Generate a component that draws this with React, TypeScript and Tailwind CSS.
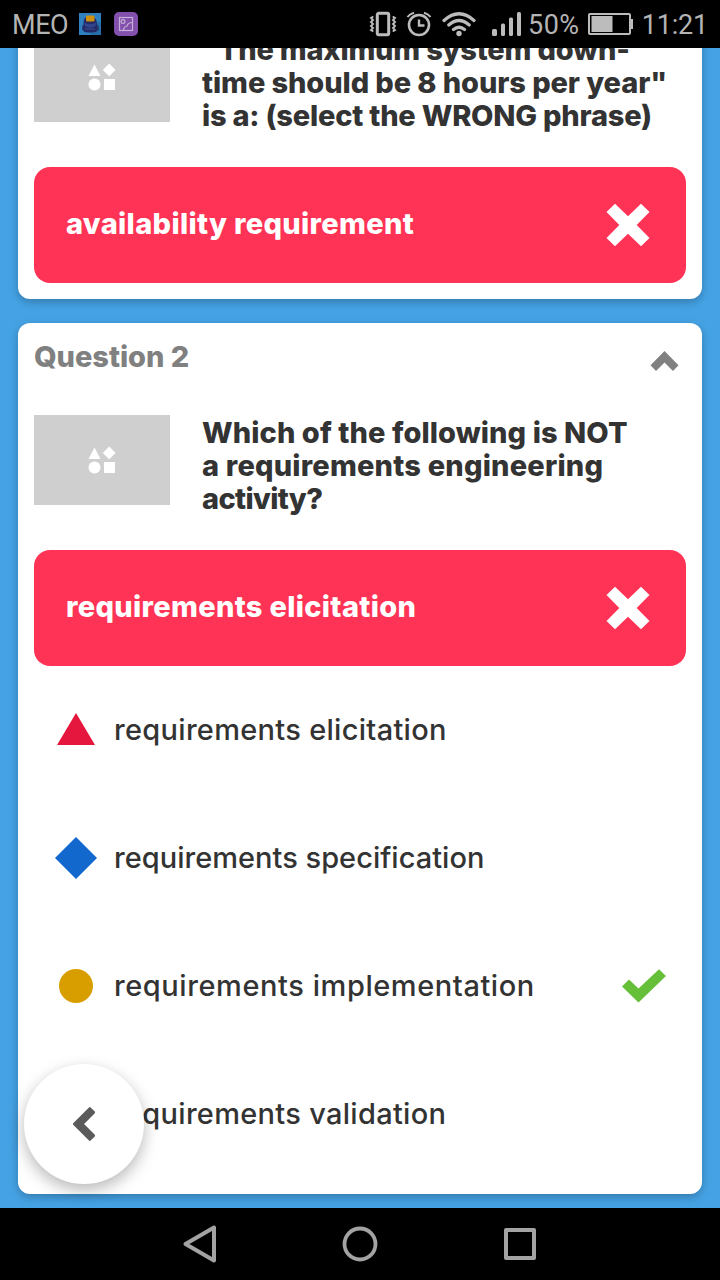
import React from 'react';

type Line = { text: string; spacing: string };

function StatusBar() {
  return (
    <header className="z-10 flex h-12 shrink-0 items-center bg-black pl-[12px] pr-[12px] font-['Roboto',sans-serif] text-[27px] leading-[48px] text-[#b4b4b4]">
      <span className="w-[67px] pt-[2px] tracking-[-0.4px]">MEO</span>
      <svg className="h-[22px] w-[22px]" viewBox="0 0 22 22">
        <rect width="22" height="22" fill="#2e80bf" />
        <path d="M9 17l11-9 2 3v11H12z" fill="#266fa8" />
        <rect x="3" y="12" width="17" height="6" rx="2" fill="#243b78" />
        <path d="M4.500 18V11C4.500 5 7 3 11 3s7 3 7 8v7c0 1-4 1.500-7 1.500S4.500 19 4.500 18z" fill="#232a66" />
        <rect x="7" y="2.500" width="8.500" height="6" rx="1" fill="#d0900f" />
        <path d="M5 9c4 3 9 3 12.500 0l-1 4c-3 2-8 2-10.500 0z" fill="#34458d" />
        <path d="M6 16h10" stroke="#39509b" />
      </svg>
      <svg className="ml-[13px] h-[24px] w-[24px]" viewBox="0 0 24 24" fill="none" stroke="#c5afd6" strokeWidth="1.200">
        <rect width="24" height="24" rx="5" fill="#8350ad" stroke="none" />
        <rect x="5.500" y="5.500" width="13" height="13" />
        <circle cx="9" cy="9.500" r="1.900" />
        <path d="M9.500 18.500c0-2.500 1.500-4 3.500-4.500 .5-2.200 2.500-3.500 5.500-3.500" />
      </svg>
      <svg className="ml-[231px] h-[26px] w-[28px]" viewBox="0 0 28 26" fill="none" stroke="#bcbcbc">
        <rect x="8.300" y="2.300" width="11.400" height="21.400" rx="1.500" strokeWidth="3" />
        <path d="M4.300 5.500 2 7l2 2-2 2 2 2-2 2 2 2-2 2 2.300 1.500M23.700 5.500l2.300 1.500-2 2 2 2-2 2 2 2-2 2 2 2-2.300 1.500" strokeWidth="1.900" />
      </svg>
      <svg className="ml-[9px] h-[26px] w-[26px]" viewBox="0 0 26 26" fill="none" stroke="#bcbcbc">
        <circle cx="13" cy="14" r="10" strokeWidth="2.600" />
        <path d="M1.500 6Q3.500 3 8 1.700M24.500 6Q22.500 3 18 1.700" strokeWidth="2" />
        <path d="M13 8.500v6h5.500" strokeWidth="2.400" />
      </svg>
      <svg className="ml-[9px] h-[26px] w-[36px]" viewBox="0 0 36 26" fill="none" stroke="#bcbcbc" strokeWidth="3.200" strokeLinecap="round">
        <path d="M3 9.500Q18-4 33 9.500M7.800 14Q18 5 28.200 14M12.500 18.500Q18 14 23.500 18.500" />
        <circle cx="18" cy="22.500" r="2.700" fill="#bcbcbc" stroke="none" />
      </svg>
      <svg className="ml-[14px] h-[26px] w-[30px]" viewBox="0 0 30 26" fill="#bcbcbc">
        <rect x="1" y="18" width="5" height="7" rx="1.500" />
        <rect x="10" y="12.500" width="4" height="12.500" rx="1.500" />
        <rect x="18" y="6.500" width="4" height="18.500" rx="1.500" />
        <rect x="26" y="1" width="4" height="24" rx="1.500" />
      </svg>
      <span className="ml-[7px] w-[60px] pt-[2px] tracking-[0.5px]">50%</span>
      <svg className="h-[24px] w-[46px]" viewBox="0 0 46 24">
        <rect x="1" y="2" width="41" height="20" rx="1" fill="none" stroke="#bcbcbc" strokeWidth="2" />
        <path d="M3.500 4h21v16h-21zM43 7h2v10h-2z" fill="#bcbcbc" />
      </svg>
      <span className="ml-auto pt-[2px] tracking-[-0.2px]">11:21</span>
    </header>
  );
}

function Placeholder() {
  return (
    <div className="flex h-[90px] w-[136px] shrink-0 items-center justify-center bg-[#cfcfcf]">
      <svg className="h-[28px] w-[28px]" viewBox="0 0 28 28" fill="#fff">
        <path d="M6.500 1.500 12.500 13H.5zM21.200 .5 27.600 6.900 21.200 13.300 14.800 6.900z" />
        <circle cx="6.500" cy="21.500" r="6" />
        <rect x="16" y="16" width="11" height="11" />
      </svg>
    </div>
  );
}

function QuestionCard({ title, lines, answer, children }: { title: Line; lines: Line[]; answer: Line; children?: React.ReactNode }) {
  return (
    <section className="rounded-[12px] bg-white p-4 shadow-[0_3px_10px_rgba(0,0,0,0.26)]">
      <div className="flex h-[76px] justify-between pr-[7px]">
        <h2 className={`pt-px text-[29px] font-extrabold leading-[33px] text-[#808080] ${title.spacing}`}>{title.text}</h2>
        <svg className="mt-[12px] h-5 w-7 overflow-visible" viewBox="0 0 28 20" fill="#808080">
          <path d="M13.500 0 27.500 14.300 22 20 13.500 11.500 5 20-.5 14.300z" />
        </svg>
      </div>
      <div className="flex h-[135px] gap-8">
        <Placeholder />
        <div className="pt-px text-[29px] font-extrabold leading-[33px] text-[#333]">
          {lines.map((l) => (
            <div key={l.text} className={`whitespace-nowrap ${l.spacing}`}>{l.text}</div>
          ))}
        </div>
      </div>
      <div className="flex h-[116px] items-center justify-between rounded-[16px] bg-[#ff3355] pl-8 pr-[36px]">
        <span className={`pb-[4px] text-[29px] font-extrabold leading-[33px] text-white ${answer.spacing}`}>{answer.text}</span>
        <svg className="h-[44px] w-[44px]" viewBox="0 0 44 44" fill="#fff">
          <path d="M9 .7 22 13.300 35 .7 43.500 9 30.700 22 43.500 35 35 43.300 22 30.700 9 43.300 .5 35 13.300 22 .5 9z" />
        </svg>
      </div>
      {children}
    </section>
  );
}

const shapes = [
  <path key="t" d="M21 4 40 36H2z" fill="#e5173f" />,
  <path key="d" d="M21 0 42 21 21 42 0 21z" fill="#1368ce" />,
  <circle key="c" cx="21" cy="21" r="17" fill="#d89e00" />,
  <rect key="s" x="5" y="5" width="32" height="32" fill="#26890c" />,
];

const options: (Line & { correct?: boolean })[] = [
  { text: 'requirements elicitation', spacing: 'tracking-[0.3px]' },
  { text: 'requirements specification', spacing: 'tracking-[0.02px]' },
  { text: 'requirements implementation', spacing: 'tracking-[0.57px]', correct: true },
  { text: 'requirements validation', spacing: 'tracking-[0.3px]' },
];

function Options() {
  return (
    <ul>
      {options.map((o, i) => (
        <li key={o.text} className="flex h-32 items-center pl-[21px] pr-5">
          <svg className="h-[42px] w-[42px] shrink-0" viewBox="0 0 42 42">{shapes[i]}</svg>
          <div className={`ml-4 whitespace-nowrap pb-[2px] pl-px text-[29px] font-medium leading-[33px] text-[#333] ${o.spacing}`}>{o.text}</div>
          {o.correct && (
            <svg className="ml-auto h-[34px] w-[44px]" viewBox="0 0 44 34" fill="#66bf39">
              <path d="M0 17.500 7 10.500 16.500 19.500 37 .3 44 7 16.500 33.500z" />
            </svg>
          )}
        </li>
      ))}
    </ul>
  );
}

export default function App() {
  return (
    <div className="relative flex h-[1280px] w-[720px] flex-col overflow-hidden bg-[#45a3e5] font-['Inter',sans-serif]">
      <StatusBar />
      <main className="flex min-h-0 flex-1 flex-col gap-6 overflow-hidden px-[18px]">
        <div className="-mt-[108px]">
          <QuestionCard
            title={{ text: 'Question 1', spacing: 'tracking-normal' }}
            lines={[
              { text: '"The maximum system down-', spacing: 'tracking-[-0.2px]' },
              { text: 'time should be 8 hours per year"', spacing: 'tracking-[-0.09px]' },
              { text: 'is a: (select the WRONG phrase)', spacing: 'tracking-[-0.22px]' },
            ]}
            answer={{ text: 'availability requirement', spacing: 'tracking-[0.33px]' }}
          />
        </div>
        <QuestionCard
          title={{ text: 'Question 2', spacing: 'tracking-[-0.05px]' }}
          lines={[
            { text: 'Which of the following is NOT', spacing: 'tracking-[0.08px]' },
            { text: 'a requirements engineering', spacing: 'tracking-[0.2px]' },
            { text: 'activity?', spacing: 'tracking-[-0.65px]' },
          ]}
          answer={{ text: 'requirements elicitation', spacing: 'tracking-[0.32px]' }}
        >
          <Options />
        </QuestionCard>
      </main>
      <button className="absolute bottom-24 left-6 flex h-[120px] w-[120px] items-center justify-center rounded-full bg-white shadow-[0_6px_16px_rgba(0,0,0,0.28)]">
        <svg className="h-[34px] w-[22px]" viewBox="0 0 22 34" fill="#5b5b5b" stroke="#5b5b5b" strokeWidth="3" strokeLinejoin="round">
          <path d="M1.500 17 16.800 1.700 20.500 5.400 9 17 20.500 28.600 16.800 32.300z" />
        </svg>
      </button>
      <nav className="z-10 flex h-[72px] shrink-0 items-center justify-center gap-[120px] bg-black">
        <svg className="h-10 w-10" viewBox="0 0 40 40" fill="none" stroke="#a3a3a3" strokeWidth="4" strokeLinejoin="round">
          <path d="M5.500 20 34 3.500v33z" />
        </svg>
        <svg className="h-10 w-10" viewBox="0 0 40 40" fill="none" stroke="#a3a3a3" strokeWidth="3.800">
          <circle cx="20" cy="20" r="15.500" />
        </svg>
        <svg className="h-10 w-10" viewBox="0 0 40 40" fill="none" stroke="#a3a3a3" strokeWidth="4" strokeLinejoin="round">
          <path d="M6 6h28v28H6z" />
        </svg>
      </nav>
    </div>
  );
}
